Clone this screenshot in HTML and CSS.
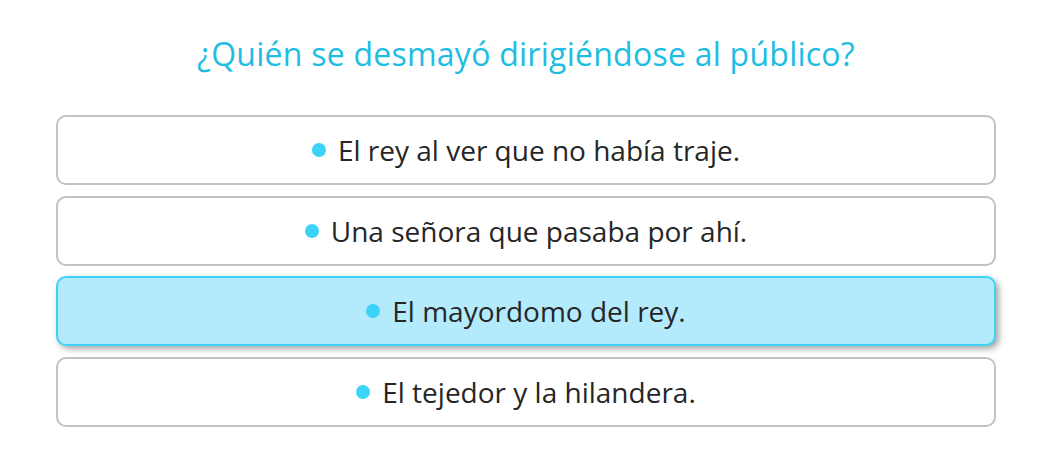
FILE: index.html
```html
<!DOCTYPE html>
<html lang="es">
<head>
<meta charset="utf-8">
<link rel="stylesheet" href="styles.css">
</head>
<body>
<main class="quiz">
  <h1 class="question">¿Quién se desmayó dirigiéndose al público?</h1>
  <ul class="options">
    <li class="option"><span class="dot"></span><span class="label">El rey al ver que no había traje.</span></li>
    <li class="option"><span class="dot"></span><span class="label">Una señora que pasaba por ahí.</span></li>
    <li class="option selected"><span class="dot"></span><span class="label">El mayordomo del rey.</span></li>
    <li class="option"><span class="dot"></span><span class="label">El tejedor y la hilandera.</span></li>
  </ul>
</main>
</body>
</html>
```
FILE: styles.css
```css
html, body {
  margin: 0;
  padding: 0;
  background: #ffffff;
}
body {
  font-family: "Open Sans", "Noto Sans", sans-serif;
  width: 1050px;
  height: 476px;
  overflow: hidden;
}
.quiz {
  padding: 33px 54px 0 56px;
}
.question {
  margin: 0;
  font-weight: 400;
  font-size: 32px;
  letter-spacing: 0.25px;
  line-height: 42px;
  color: #20bde3;
  text-align: center;
}
.options {
  list-style: none;
  margin: 40px 0 0;
  padding: 0;
  display: flex;
  flex-direction: column;
  gap: 10.67px;
}
.option {
  box-sizing: border-box;
  height: 70px;
  border: 2px solid #c2c2c2;
  border-radius: 10px;
  background: #ffffff;
  display: flex;
  align-items: center;
  justify-content: center;
  gap: 12px;
  font-size: 28px;
  color: #262626;
}
.option.selected {
  background: #b3ebfd;
  border-color: #3ed2f6;
  box-shadow: 3px 3px 6px rgba(0, 0, 0, 0.35);
}
.dot {
  width: 14px;
  height: 14px;
  border-radius: 50%;
  background: #3bd3f8;
  flex: none;
}
.label {
  line-height: 38px;
}
```
